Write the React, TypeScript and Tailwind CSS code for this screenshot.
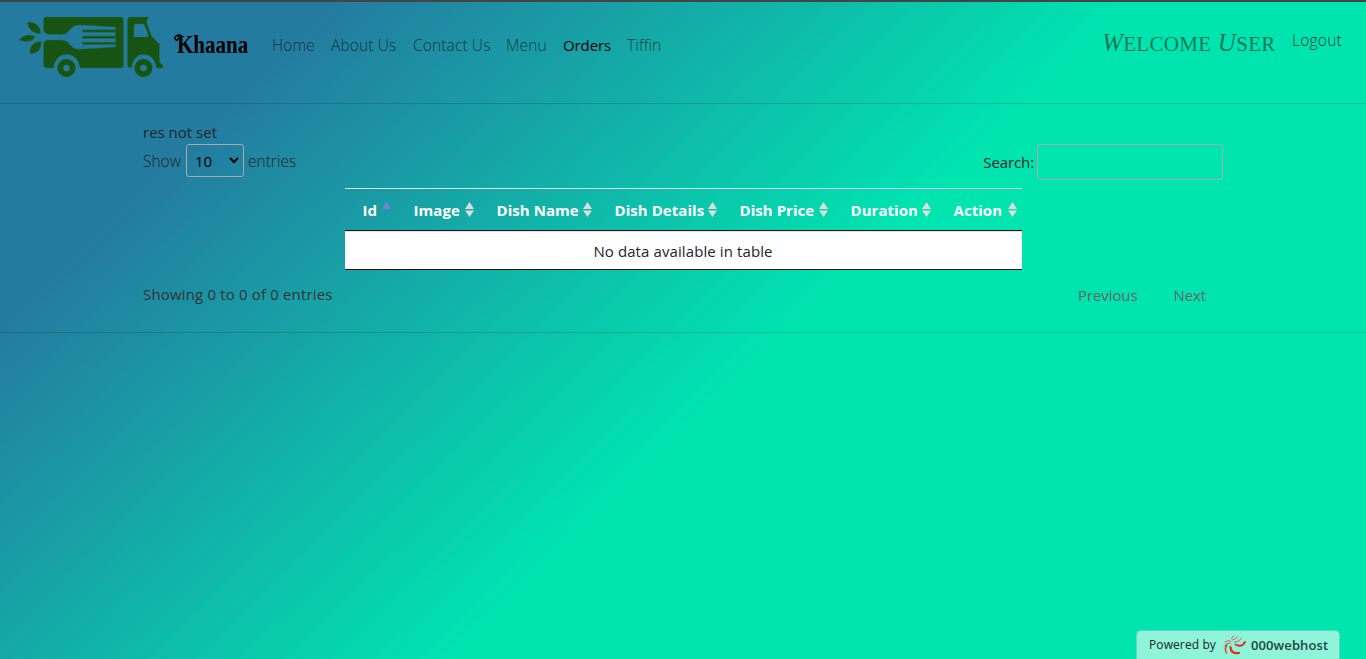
const truck = "#175413";

function Truck() {
  return (
    <svg width="146" height="64" viewBox="18.500 15 146 64" fill={truck} stroke="#2b6a4a" strokeWidth="0.4" className="shrink-0">
      <path d="M46 17H120Q123 17 123 20V65Q123 68 120 68H79.500Q77 54.500 66 54.500Q55 54.500 53 68H46Q43 68 43 65V44Q43 40 48 40H61Q66 40 69 44Q72 49 78 49.300L115 47V27L80 25Q74 24.500 70 29Q66 34.500 62 34.500H49Q43 34 43 29V20Q43 17 46 17Z" />
      <path fillRule="evenodd" d="M130 17H148L146 22L151 36L159 44V62Q162 64 163 68H156Q154 54.500 143 54.500Q133 54.500 131 68Q127 68 127 65V20Q127 17 130 17ZM135 24Q133.500 24 133.500 26V37H147.500V34L143.500 24Z" />
      <path fillRule="evenodd" d="M66 59a9 9 0 1 0 .01 0ZM66 64.700a3.300 3.300 0 1 1-.01 0ZM143 59a9 9 0 1 0 .01 0ZM143 64.700a3.300 3.300 0 1 1-.01 0Z" />
      <path d="M27 22Q40 22 40 34Q28 33 27 22ZM18.500 40Q26 32 35 36.500Q31 44 18.500 40ZM40.500 41Q28 43 29.500 54Q42 53 40.500 41Z" />
      <path d="M82 29.800H115V32.200H82ZM82 36H115V38.400H82ZM82 42.200H115V44.600H82Z" />
    </svg>
  );
}

function Sort({ first }: { first?: boolean }) {
  return (
    <svg width="9" height="16" viewBox="0 0 9 16" className="shrink-0" fill={first ? "#7d7bdc" : "#dddddd"}>
      <path d="M0 7L4.5 0L9 7Z" />
      {!first && <path d="M0 8.5H9L4.5 15Z" />}
    </svg>
  );
}

function HostMark() {
  return (
    <svg width="24" height="21" viewBox="0.500 0 24 21" fill="none" stroke="#e32b1e" strokeLinecap="round" className="shrink-0">
      <path d="M4.500 10Q1.500 14 4 18" strokeWidth="1.300" />
      <path d="M8 12Q8 19 16.500 18" strokeWidth="2.200" />
      <path d="M13 9.500Q19 13 22.500 7" strokeWidth="1.900" />
      <path d="M12 7Q17 7 19 3M10 5Q14 4 15 1.500M9 3.500L11 1M8 8Q4 8 1.500 11M8 6Q5 5 2.500 7" strokeWidth="0.700" />
    </svg>
  );
}

const nav = [
  ["Home", "w-[43px]"],
  ["About Us", "w-[66px]"],
  ["Contact Us", "w-[77px]"],
  ["Menu", "w-[41px]"],
  ["Orders", "w-[48px]"],
  ["Tiffin", "w-[36px]"],
];

const cols = [
  ["Id", "w-[51px]", "w-[19px]"],
  ["Image", "w-[83px]", "w-[51px]"],
  ["Dish Name", "w-[118px]", "w-[86px]"],
  ["Dish Details", "w-[125px]", "w-[93px]"],
  ["Dish Price", "w-[111px]", "w-[79px]"],
  ["Duration", "w-[103px]", "w-[71px]"],
  ["Action", "w-[86px]", "w-[54px]"],
];

export default function App() {
  return (
    <div className="flex h-[659px] w-[1366px] flex-col overflow-hidden bg-[linear-gradient(136deg,#247ba0_16.5%,#00e5b0_55.7%)] font-['Open_Sans',sans-serif] text-[15px] leading-6 text-[#212529]">
      <header className="flex h-[104px] shrink-0 items-start border-t-2 border-b border-t-[#444] border-b-black/15 pl-[19px]">
        <div className="mt-[13px] w-[144px]"><Truck /></div>
        <div className="relative mt-[27px] ml-[14px] w-[95px]">
          <svg width="9" height="9" viewBox="0 0 9 9" fill="none" stroke="black" strokeWidth="1.5" className="absolute top-[5px] -left-[3px]"><path d="M8 2Q5 0 2 2Q0 4 2 6Q4 7 4 4" /></svg>
          <div className="origin-left scale-x-[0.84] whitespace-nowrap font-['Liberation_Serif',serif] text-[25px] leading-8 font-bold text-black">Khaana</div>
        </div>
        <nav className="mt-[31px] flex gap-4 whitespace-nowrap text-[15.5px] font-light tracking-[0.13px] text-black/65">
          {nav.map(([t, w]) => <a key={t} className={w + (t === "Orders" ? " text-[15px] tracking-[-0.1px] text-black font-normal" : "")}>{t}</a>)}
        </nav>
        <div className="mt-[25px] ml-auto w-[174px] whitespace-nowrap font-['Liberation_Serif',serif] text-[25px] leading-8 tracking-[0.3px] text-black/50"><i>W</i><span className="text-[21px]">ELCOME</span> <i>U</i><span className="text-[21px]">SER</span></div>
        <a className="mt-[26px] mr-[24px] ml-4 w-[50px] text-[15.5px] font-light tracking-[0.25px] text-black/80">Logout</a>
      </header>
      <main className="flex h-[229px] shrink-0 flex-col border-b border-black/15 px-[143px] pt-[16px]">
        <div className="h-6">res not set</div>
        <div className="flex h-[36px] items-start justify-between">
          <div className="flex items-center gap-[4px] text-[15.5px] font-light text-[#222]">
            <span className="w-[39px]">Show</span>
            <div className="flex h-[33px] w-[58px] items-center justify-between rounded-[3px] border border-[#aaa] pr-1 pl-[8px] text-black">
              <span className="text-[15px] font-normal">10</span>
              <svg width="10" height="7" viewBox="0 0 10 7" fill="none" stroke="black" strokeWidth="2"><path d="M1 1L5 5L9 1" /></svg>
            </div>
            <span>entries</span>
          </div>
          <div className="flex items-center gap-[3px]"><span className="tracking-[-0.1px]">Search:</span><input className="h-[36px] w-[186px] rounded-[3px] border border-[#aaa] bg-transparent" /></div>
        </div>
        <div className="mt-[8px] w-[677px] self-center">
          <div className="flex h-[43px] items-center border-t border-b border-t-[#dee2e6] border-b-[#111] font-bold tracking-[0.05px] text-white">
            {cols.map(([t, w, tw], i) => <div key={t} className={"flex items-center pl-[18px] whitespace-nowrap " + w}><span className={tw}>{t}</span><Sort first={i === 0} /></div>)}
          </div>
          <div className="flex h-[39px] items-center justify-center border-t border-b border-t-[#dee2e6] border-b-[#111] bg-white tracking-[0.1px]">No data available in table</div>
        </div>
        <div className="mt-[13px] flex justify-between">
          <span className="-mt-px tracking-[0.16px] text-[#333]">Showing 0 to 0 of 0 entries</span>
          <div className="flex gap-9 pr-[17px] tracking-[-0.1px] text-[#666]"><span>Previous</span><span>Next</span></div>
        </div>
      </main>
      <div className="mt-auto mr-[26px] flex h-[29px] w-[204px] items-center self-end rounded-t-[5px] border border-b-0 border-[#62d9bd] bg-[#8ff4da] pl-[12px] text-[12px] tracking-[0.1px]">
        <span className="mr-[6px] w-[68px] whitespace-nowrap">Powered by</span>
        <HostMark />
        <span className="ml-[4px] text-[13px] font-semibold text-[#24463e]">000webhost</span>
      </div>
    </div>
  );
}
